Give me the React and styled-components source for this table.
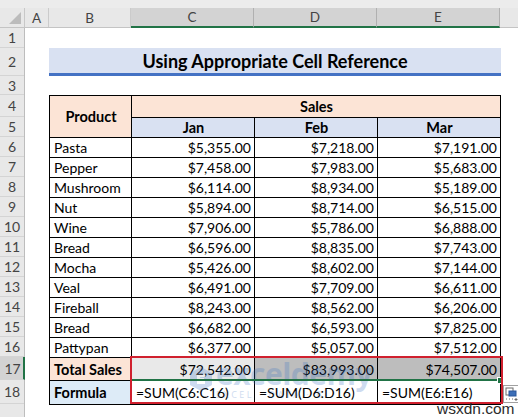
import React from 'react'
import styled, { createGlobalStyle } from 'styled-components'

const GlobalStyle = createGlobalStyle`
  html, body {
    margin: 0;
    padding: 0;
    background: #ffffff;
  }
  body {
    font-family: Lato, 'Open Sans', sans-serif;
    color: #000;
  }
`;

const Page = styled.div`
  position: relative;
  width: 518px;
  height: 417px;
  overflow: hidden;
  background: #fff;
`;

const TopStrip = styled.div`
  height: 8px;
  background: #ececec;
`;

const ColHeaderRow = styled.div`
  display: flex;
  height: 19px;
  background: #e8e8e8;
  border-bottom: 1px solid #c4c4c4;
`;

const Corner = styled.div`
  position: relative;
  width: 24px;
  border-right: 1px solid #c8c8c8;
  &::after {
    content: '';
    position: absolute;
    right: 3px;
    bottom: 3px;
    border-left: 12px solid transparent;
    border-bottom: 12px solid #bcbcbc;
  }
`;

const ColHead = styled.div`
  box-sizing: border-box;
  width: ${p => p.$w}px;
  display: flex;
  align-items: center;
  justify-content: center;
  font-size: 13.5px;
  color: #444;
  border-right: 1px solid ${p => (p.$active ? '#b0b0b0' : '#cbcbcb')};
  background: ${p => (p.$active ? '#d3d3d3' : 'transparent')};
  border-bottom: ${p => (p.$active ? '2px solid #217346' : 'none')};
  margin-bottom: ${p => (p.$active ? '-1px' : '0')};
`;

const Body = styled.div`
  display: flex;
`;

const RowHeaders = styled.div`
  width: 24px;
  border-right: 1px solid #bdbdbd;
  background: #e8e8e8;
  display: flex;
  flex-direction: column;
  height: 390px;
`;

const RowNum = styled.div`
  box-sizing: border-box;
  height: ${p => p.$h}px;
  flex-shrink: 0;
  display: flex;
  align-items: center;
  justify-content: center;
  font-size: 14px;
  color: #444;
  border-bottom: 1px solid #d4d4d4;
  background: ${p => (p.$active ? '#d3d3d3' : 'transparent')};
  border-right: ${p => (p.$active ? '2px solid #217346' : 'none')};
  margin-right: ${p => (p.$active ? '-1px' : '0')};
  padding-left: ${p => (p.$active ? '2px' : '0')};
`;

const Sheet = styled.div`
  position: relative;
  flex: 1;
  display: flex;
  flex-direction: column;
  padding-left: 24px;
`;

const Spacer = styled.div`
  height: ${p => p.$h}px;
  flex-shrink: 0;
`;

const Title = styled.div`
  box-sizing: border-box;
  width: 452px;
  height: 28px;
  background: #d9e1f2;
  border-bottom: 3px solid #4472c4;
  display: flex;
  align-items: center;
  justify-content: center;
  font-weight: 700;
  font-size: 18px;
  padding-top: 1px;
`;

const TableWrap = styled.div`
  position: relative;
  width: 452px;
`;

const Table = styled.div`
  display: grid;
  grid-template-columns: 81px 122px 122px 122px;
  grid-template-rows: 21px 19px repeat(11, 19px) 22px 23px;
  gap: 1px;
  padding: 1px;
  background: #000;
`;

const Cell = styled.div`
  display: flex;
  align-items: center;
  justify-content: ${p => (p.$align === 'right' ? 'flex-end' : p.$align === 'center' ? 'center' : 'flex-start')};
  padding: 0 3px 0 4px;
  font-size: ${p => (p.$bold ? '14.5px' : '14px')};
  font-weight: ${p => (p.$bold ? 700 : 400)};
  background: ${p => p.$bg || '#fff'};
  white-space: nowrap;
  overflow: hidden;
  grid-row: ${p => p.$row || 'auto'};
  grid-column: ${p => p.$col || 'auto'};
`;

const RedBox = styled.div`
  position: absolute;
  left: 81px;
  top: 261px;
  width: 373px;
  height: 48px;
  box-sizing: border-box;
  border: 2px solid #d0202e;
  pointer-events: none;
`;

const SelectLine = styled.div`
  position: absolute;
  left: 83px;
  top: 284px;
  width: 368px;
  height: 2px;
  background: #217346;
`;

const FillHandle = styled.div`
  position: absolute;
  left: 448px;
  top: 282px;
  width: 5px;
  height: 5px;
  background: #217346;
  border: 1px solid #fff;
`;

const PasteIcon = styled.svg`
  position: absolute;
  left: 454px;
  top: 290px;
`;

const Watermark = styled.div`
  position: absolute;
  left: 140px;
  top: 264px;
  display: flex;
  align-items: center;
  gap: 3px;
  opacity: 0.25;
  pointer-events: none;
`;

const WmText = styled.div`
  display: flex;
  flex-direction: column;
  line-height: 1;
  color: #3b74c4;
  font-family: 'Open Sans', sans-serif;
  font-weight: 700;
  font-size: 30px;
  letter-spacing: -0.5px;
  span {
    font-size: 9px;
    letter-spacing: 2.5px;
    font-weight: 400;
    margin-top: 1px;
  }
`;

const Credit = styled.div`
  position: absolute;
  left: 437px;
  top: 400px;
  font-family: 'Liberation Sans', Arial, sans-serif;
  font-size: 15.5px;
  color: #2b2b2b;
`;

const peach = '#fce4d6';
const blue = '#d9e1f2';
const blue2 = '#ddebf7';

const data = [
  ['Pasta', '$5,355.00', '$7,218.00', '$7,191.00'],
  ['Pepper', '$7,458.00', '$7,983.00', '$5,683.00'],
  ['Mushroom', '$6,114.00', '$8,934.00', '$5,189.00'],
  ['Nut', '$5,894.00', '$8,714.00', '$6,515.00'],
  ['Wine', '$7,906.00', '$5,786.00', '$6,888.00'],
  ['Bread', '$6,596.00', '$8,835.00', '$7,743.00'],
  ['Mocha', '$5,426.00', '$8,602.00', '$7,144.00'],
  ['Veal', '$6,491.00', '$7,709.00', '$6,611.00'],
  ['Fireball', '$8,243.00', '$8,562.00', '$6,206.00'],
  ['Bread', '$6,682.00', '$6,593.00', '$7,825.00'],
  ['Pattypan', '$6,377.00', '$5,057.00', '$7,512.00'],
];

const cols = [
  { l: 'A', w: 24 },
  { l: 'B', w: 82 },
  { l: 'C', w: 123, active: true },
  { l: 'D', w: 123, active: true },
  { l: 'E', w: 123, active: true },
];

const rowHeights = [20, 28, 19, 22, 20, 20, 20, 20, 20, 20, 20, 20, 20, 20, 20, 20, 23, 24, 30];

export default function App() {
  return (
    <Page>
      <GlobalStyle />
      <TopStrip />
      <ColHeaderRow>
        <Corner />
        {cols.map(c => (
          <ColHead key={c.l} $w={c.w} $active={c.active}>{c.l}</ColHead>
        ))}
      </ColHeaderRow>
      <Body>
        <RowHeaders>
          {rowHeights.map((h, i) => (
            <RowNum key={i} $h={h} $active={i === 16}>{i < 18 ? i + 1 : ''}</RowNum>
          ))}
        </RowHeaders>
        <Sheet>
          <Spacer $h={20} />
          <Title>Using Appropriate Cell Reference</Title>
          <Spacer $h={19} />
          <TableWrap>
            <Table>
              <Cell $bold $align="center" $bg={peach} $row="1 / span 2" $col="1">Product</Cell>
              <Cell $bold $align="center" $bg={peach} $col="2 / span 3">Sales</Cell>
              <Cell $bold $align="center" $bg={blue}>Jan</Cell>
              <Cell $bold $align="center" $bg={blue}>Feb</Cell>
              <Cell $bold $align="center" $bg={blue}>Mar</Cell>
              {data.map((r, i) => (
                <React.Fragment key={i}>
                  <Cell>{r[0]}</Cell>
                  <Cell $align="right">{r[1]}</Cell>
                  <Cell $align="right">{r[2]}</Cell>
                  <Cell $align="right">{r[3]}</Cell>
                </React.Fragment>
              ))}
              <Cell $bold $bg={peach}>Total Sales</Cell>
              <Cell $align="right" $bg="#e9e9e9">$72,542.00</Cell>
              <Cell $align="right" $bg="#bdbdbd">$83,993.00</Cell>
              <Cell $align="right" $bg="#bdbdbd">$74,507.00</Cell>
              <Cell $bold $bg={blue2}>Formula</Cell>
              <Cell>=SUM(C6:C16)</Cell>
              <Cell>=SUM(D6:D16)</Cell>
              <Cell>=SUM(E6:E16)</Cell>
            </Table>
            <Watermark>
              <svg width="24" height="26" viewBox="0 0 24 26">
                <path d="M12 1 L23 7 L23 19 L12 25 L1 19 L1 7 Z" fill="#3b74c4" />
                <path d="M8 8 H16 V11 H11 V12 H15 V14 H11 V15 H16 V18 H8 Z" fill="#fff" />
              </svg>
              <WmText>
                exceldemy
                <span>EXCEL · DATA · BI</span>
              </WmText>
            </Watermark>
            <SelectLine />
            <FillHandle />
            <RedBox />
            <PasteIcon width="16" height="18" viewBox="0 0 16 18">
              <rect x="0.5" y="0.5" width="15" height="17" fill="#fff" stroke="#a0a0a0" />
              <rect x="3" y="3" width="7" height="7" fill="#fff" stroke="#6b6b6b" />
              <rect x="6" y="6" width="7" height="5" fill="#3d6fb8" stroke="#2a5699" />
              <path d="M3 14 h1 M6 14 h1 M9 14 h1" stroke="#6b6b6b" />
              <path d="M13 13 v3 M11.5 14.5 h3" stroke="#6b6b6b" />
            </PasteIcon>
          </TableWrap>
        </Sheet>
      </Body>
      <Credit>wsxdn.com</Credit>
    </Page>
  )
}
